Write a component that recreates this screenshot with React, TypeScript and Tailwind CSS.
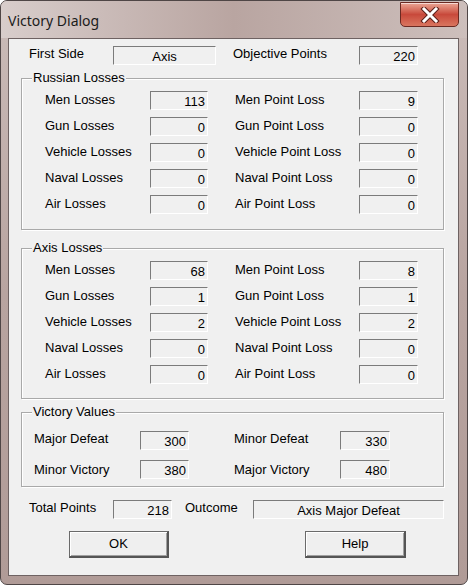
import React from 'react';

type Row = { label: string; value: string; pLabel: string; pValue: string };

const russian: Row[] = [
  { label: 'Men Losses', value: '113', pLabel: 'Men Point Loss', pValue: '9' },
  { label: 'Gun Losses', value: '0', pLabel: 'Gun Point Loss', pValue: '0' },
  { label: 'Vehicle Losses', value: '0', pLabel: 'Vehicle Point Loss', pValue: '0' },
  { label: 'Naval Losses', value: '0', pLabel: 'Naval Point Loss', pValue: '0' },
  { label: 'Air Losses', value: '0', pLabel: 'Air Point Loss', pValue: '0' },
];

const axis: Row[] = [
  { label: 'Men Losses', value: '68', pLabel: 'Men Point Loss', pValue: '8' },
  { label: 'Gun Losses', value: '1', pLabel: 'Gun Point Loss', pValue: '1' },
  { label: 'Vehicle Losses', value: '2', pLabel: 'Vehicle Point Loss', pValue: '2' },
  { label: 'Naval Losses', value: '0', pLabel: 'Naval Point Loss', pValue: '0' },
  { label: 'Air Losses', value: '0', pLabel: 'Air Point Loss', pValue: '0' },
];

// sunken read-only edit box
function Field({ value, className, center }: { value: string; className: string; center?: boolean }) {
  return (
    <div
      className={`h-[19px] border border-t-[#7b7b7b] border-l-[#7b7b7b] border-b-white border-r-white bg-[#f0f0f0] flex items-center pt-[2px] ${center ? 'justify-center' : 'justify-end pr-[2px]'} ${className}`}
    >
      {value}
    </div>
  );
}

function Group({ title, className, children }: { title: string; className: string; children: React.ReactNode }) {
  return (
    <div className={`relative ml-[12px] w-[423px] border border-[#a9a9a9] shadow-[inset_1px_1px_0_#fff,1px_1px_0_#fff] ${className}`}>
      <span className="absolute left-[10px] top-[-9px] bg-[#f0f0f0] px-[1px] leading-[16px]">{title}</span>
      {children}
    </div>
  );
}

function LossRows({ rows }: { rows: Row[] }) {
  return (
    <div className="flex flex-col gap-[7px] pt-[12px] pb-[13px]">
      {rows.map((r) => (
        <div key={r.label} className="flex items-center h-[19px]">
          <span className="w-[105px] pl-[23px] box-content -mt-[1px]">{r.label}</span>
          <Field value={r.value} className="w-[58px]" />
          <span className="ml-[27px] w-[124px] -mt-[1px]">{r.pLabel}</span>
          <Field value={r.pValue} className="w-[59px]" />
        </div>
      ))}
    </div>
  );
}

function Button({ label, className }: { label: string; className: string }) {
  return (
    <button
      className={`h-[27px] border border-[#6a6a6a] border-b-[2px] border-r-[2px] border-b-[#555] border-r-[#555] bg-[#efefef] shadow-[inset_1px_1px_0_#fff,inset_-1px_-1px_0_#a0a0a0] ${className}`}
    >
      {label}
    </button>
  );
}

export default function App() {
  return (
    <div className="w-[468px] h-[585px] bg-white">
      <div className="w-[468px] h-[585px] rounded-[7px] border border-[#4f4646] bg-gradient-to-b from-[#cbbcb9] via-[#b8a4a0] to-[#b09b97] flex flex-col overflow-hidden">
        {/* title bar */}
        <div className="relative h-[37px] flex items-start bg-gradient-to-r from-[#d8cdcb] via-[#b9a5a1] to-[#cdbfbc]">
          <span
            className="ml-[7px] mt-[10px] text-[14px] text-[#1b1b1b] leading-[20px]"
            style={{ fontFamily: '"Noto Sans", "Open Sans", sans-serif' }}
          >
            Victory Dialog
          </span>
          <div className="ml-auto mr-[8px] mt-[1px] w-[59px] h-[25px] rounded-b-[5px] border border-[#6b2a22] bg-gradient-to-b from-[#e9a595] via-[#c8493b] to-[#d9755f] shadow-[inset_0_1px_0_rgba(255,255,255,0.6)] flex items-center justify-center">
            <svg width="20" height="16" viewBox="0 0 20 16">
              <path d="M4 2 L16 14 M16 2 L4 14" stroke="#5a1f18" strokeWidth="5" strokeLinecap="square" />
              <path d="M4 2 L16 14 M16 2 L4 14" stroke="#ffffff" strokeWidth="3" strokeLinecap="square" />
            </svg>
          </div>
        </div>

        {/* client area */}
        <div
          className="ml-[7px] w-[451px] h-[538px] border border-[#6e6262] bg-[#f0f0f0] text-[13px] text-black leading-[16px] flex flex-col"
          style={{ fontFamily: '"Liberation Sans", Arial, sans-serif' }}
        >
          <div className="mt-[7px] flex items-center h-[19px]">
            <span className="ml-[20px] w-[84px] -mt-[3px]">First Side</span>
            <Field value="Axis" center className="w-[103px]" />
            <span className="ml-[17px] w-[126px] -mt-[3px]">Objective Points</span>
            <Field value="220" className="w-[59px]" />
          </div>

          <Group title="Russian Losses" className="mt-[13px] h-[152px]">
            <LossRows rows={russian} />
          </Group>

          <Group title="Axis Losses" className="mt-[18px] h-[151px]">
            <LossRows rows={axis} />
          </Group>

          <Group title="Victory Values" className="mt-[13px] h-[75px]">
            <div className="flex flex-col gap-[10px] pt-[18px]">
              <div className="flex items-center h-[19px]">
                <span className="w-[106px] pl-[12px] box-content -mt-[3px]">Major Defeat</span>
                <Field value="300" className="w-[49px]" />
                <span className="ml-[45px] w-[106px] -mt-[3px]">Minor Defeat</span>
                <Field value="330" className="w-[50px]" />
              </div>
              <div className="flex items-center h-[19px]">
                <span className="w-[106px] pl-[12px] box-content">Minor Victory</span>
                <Field value="380" className="w-[49px]" />
                <span className="ml-[45px] w-[106px]">Major Victory</span>
                <Field value="480" className="w-[50px]" />
              </div>
            </div>
          </Group>

          <div className="mt-[13px] flex items-center h-[19px]">
            <span className="ml-[20px] w-[84px] -mt-[3px]">Total Points</span>
            <Field value="218" className="w-[59px]" />
            <span className="ml-[13px] w-[68px] -mt-[3px]">Outcome</span>
            <Field value="Axis Major Defeat" center className="w-[191px]" />
          </div>

          <div className="mt-[12px] flex items-center">
            <Button label="OK" className="ml-[60px] w-[100px]" />
            <Button label="Help" className="ml-[136px] w-[101px]" />
          </div>
        </div>
      </div>
    </div>
  );
}
